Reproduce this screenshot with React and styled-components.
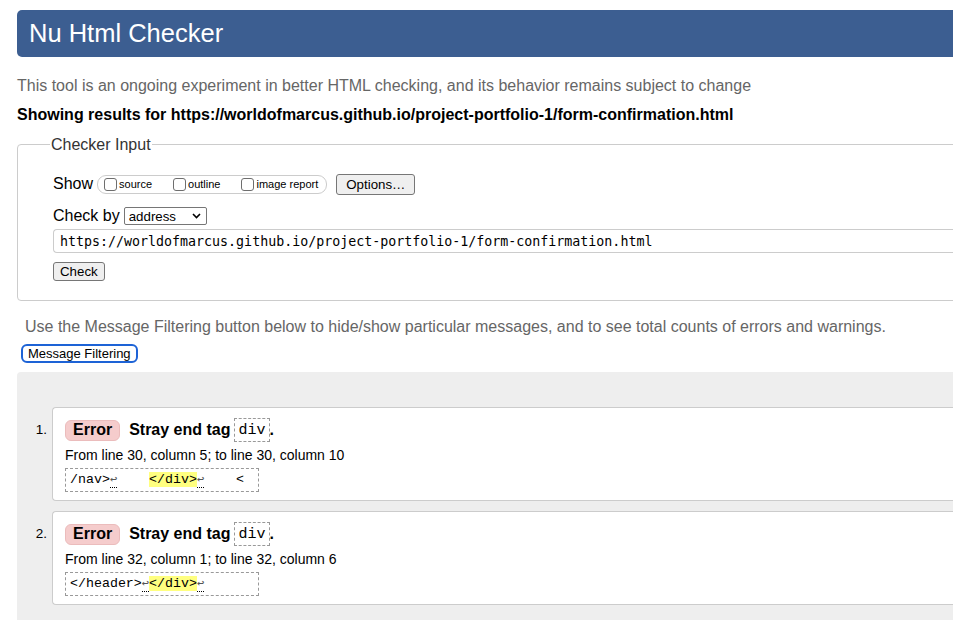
import React from "react";
import styled, { createGlobalStyle } from "styled-components";

const GlobalStyle = createGlobalStyle`
  html, body {
    margin: 0;
    padding: 0;
    background: #fff;
    overflow: hidden;
  }
  body {
    font-family: "Liberation Sans", Arial, Helvetica, sans-serif;
    color: #000;
  }
`;

const Page = styled.div`
  width: 1080px;
  height: 610px;
  padding: 10px 0 0 17px;
  overflow: hidden;
`;

const Header = styled.h1`
  margin: 0;
  height: 47px;
  display: flex;
  align-items: center;
  padding-left: 12px;
  background: #3c5e91;
  color: #fff;
  font-size: 25.5px;
  font-weight: normal;
  border-radius: 5px 0 0 5px;
`;

const Intro = styled.p`
  margin: 19px 0 0;
  font-size: 16px;
  line-height: 19px;
  color: #666;
`;

const ResultsFor = styled.p`
  margin: 10px 0 0;
  font-size: 16px;
  line-height: 19px;
  font-weight: bold;
`;

const Fieldset = styled.fieldset`
  margin: 11px 0 0;
  padding: 0 0 19px;
  border: 1px solid #ccc;
  border-radius: 4px 0 0 4px;
`;

const Legend = styled.legend`
  margin-left: 32px;
  padding: 0 1px;
  font-size: 16px;
  line-height: 19px;
  color: #333;
`;

const FormBody = styled.div`
  display: flex;
  flex-direction: column;
  align-items: flex-start;
  padding-left: 35px;
  font-size: 16px;
  color: #000;
`;

const Row = styled.div`
  display: flex;
  align-items: center;
  gap: ${(p) => p.$gap || 4}px;
  height: ${(p) => p.$h}px;
  margin-top: ${(p) => p.$top}px;
`;

const CheckGroup = styled.span`
  display: inline-flex;
  align-items: center;
  gap: 21px;
  height: 17px;
  padding: 0 8px 0 6px;
  border: 1px solid #ccc;
  border-radius: 9px;
`;

const CheckLabel = styled.label`
  display: inline-flex;
  align-items: center;
  gap: 2px;
  font-size: 11px;
  color: #000;
`;

const CheckBox = styled.input`
  appearance: none;
  margin: 0;
  width: 13px;
  height: 13px;
  border: 1px solid #6e6e6e;
  border-radius: 3px;
  background: #fff;
`;

const Button = styled.button`
  margin-left: ${(p) => p.$left || 0}px;
  height: ${(p) => p.$h || 19}px;
  padding: 0 ${(p) => p.$pad || 6}px;
  font-family: "Liberation Sans", Arial, sans-serif;
  font-size: 13.3px;
  color: #000;
  background: #efefef;
  border: 1px solid #767676;
  border-radius: 3px;
`;

const SelectBox = styled.span`
  display: inline-flex;
  align-items: center;
  justify-content: space-between;
  box-sizing: border-box;
  width: 83px;
  height: 18px;
  padding: 0 5px 0 4px;
  border: 1px solid #767676;
  border-radius: 2px;
  background: #fff;
  font-size: 13.3px;
`;

const UrlInput = styled.div`
  box-sizing: border-box;
  width: 960px;
  height: 24px;
  margin-top: 2px;
  display: flex;
  align-items: center;
  padding-left: 6px;
  border: 1px solid #ccc;
  border-right: none;
  border-radius: 4px 0 0 4px;
  font-family: "DejaVu Sans Mono", Menlo, monospace;
  font-size: 13.3px;
  color: #000;
`;

const Hint = styled.p`
  margin: 16px 0 0 8px;
  font-size: 16px;
  line-height: 19px;
  color: #666;
`;

const FilterButton = styled.button`
  margin: 8px 0 0 4px;
  height: 19px;
  padding: 0 5px;
  font-family: "Liberation Sans", Arial, sans-serif;
  font-size: 13px;
  color: #000;
  background: #fff;
  border: 2px solid #1d63d6;
  border-radius: 6px;
`;

const Results = styled.div`
  margin-top: 9px;
  height: 300px;
  padding-top: 35px;
  background: #eee;
  border-radius: 4px 0 0 0;
  display: flex;
  flex-direction: column;
  gap: 10px;
`;

const Item = styled.div`
  display: grid;
  grid-template-columns: 35px 1fr;
`;

const Number = styled.span`
  font-size: 13.5px;
  line-height: 16px;
  padding: 15px 5px 0 0;
  text-align: right;
`;

const Card = styled.div`
  background: #fff;
  border: 1px solid #ccc;
  border-right: none;
  border-radius: 4px 0 0 4px;
  padding: 10px 0 8px 12px;
`;

const Title = styled.div`
  display: flex;
  align-items: center;
  font-size: 16px;
  font-weight: bold;
  height: 24px;
`;

const Badge = styled.span`
  display: inline-flex;
  align-items: center;
  height: 21px;
  padding: 0 7px 0 7px;
  margin-right: 9px;
  background: #f5cccc;
  border: 1px solid #ebbcbc;
  border-radius: 6px;
  box-sizing: border-box;
`;

const Code = styled.code`
  display: inline-flex;
  align-items: center;
  height: 24px;
  box-sizing: border-box;
  margin-left: 4px;
  padding: 0 3px;
  border: 1px dashed #999;
  font-family: "Liberation Mono", "Courier New", monospace;
  font-weight: normal;
  font-size: 15px;
`;

const Location = styled.p`
  margin: 5px 0 0;
  font-size: 14px;
  line-height: 17px;
`;

const Extract = styled.pre`
  display: inline-block;
  box-sizing: border-box;
  min-width: 194px;
  height: 24px;
  margin: 4px 0 0;
  padding: 0 4px;
  border: 1px dashed #999;
  font-family: "Liberation Mono", "Courier New", monospace;
  font-size: 13.3px;
  line-height: 22px;
`;

const Mark = styled.mark`
  background: #ffff80;
  color: #000;
`;

const LineEnd = styled.b`
  font-weight: normal;
  font-size: 12px;
  color: #555;
  border-bottom: 1px dotted #000;
`;

const Chevron = () => (
  <svg width="9" height="6" viewBox="0 0 9 6" fill="none">
    <path d="M1 1l3.5 3.5L8 1" stroke="#000" strokeWidth="1.6" />
  </svg>
);

const messages = [
  {
    from: "From line 30, column 5; to line 30, column 10",
    extract: ["/nav>", true, "    ", "</div>", true, "    <"],
  },
  {
    from: "From line 32, column 1; to line 32, column 6",
    extract: ["</header>", true, "", "</div>", true, ""],
  },
];

function Message({ n, msg }) {
  const [pre, br1, mid, hit, br2, post] = msg.extract;
  return (
    <Item>
      <Number>{n}.</Number>
      <Card>
        <Title>
          <Badge>Error</Badge>
          Stray end tag <Code>div</Code>.
        </Title>
        <Location>{msg.from}</Location>
        <Extract>
          {pre}
          {br1 && <LineEnd>↩</LineEnd>}
          {mid}
          <Mark>{hit}</Mark>
          {br2 && <LineEnd>↩</LineEnd>}
          {post}
        </Extract>
      </Card>
    </Item>
  );
}

export default function App() {
  return (
    <>
      <GlobalStyle />
      <Page>
        <Header>Nu Html Checker</Header>
        <Intro>
          This tool is an ongoing experiment in better HTML checking, and its
          behavior remains subject to change
        </Intro>
        <ResultsFor>
          Showing results for
          https://worldofmarcus.github.io/project-portfolio-1/form-confirmation.html
        </ResultsFor>
        <Fieldset>
          <Legend>Checker Input</Legend>
          <FormBody>
            <Row $h={24} $top={18}>
              Show
              <CheckGroup>
                <CheckLabel>
                  <CheckBox type="checkbox" />
                  source
                </CheckLabel>
                <CheckLabel>
                  <CheckBox type="checkbox" />
                  outline
                </CheckLabel>
                <CheckLabel>
                  <CheckBox type="checkbox" />
                  image report
                </CheckLabel>
              </CheckGroup>
              <Button $left={5} $h={21} $pad={9}>
                Options…
              </Button>
            </Row>
            <Row $h={22} $top={9}>
              Check by
              <SelectBox>
                address
                <Chevron />
              </SelectBox>
            </Row>
            <UrlInput>
              https://worldofmarcus.github.io/project-portfolio-1/form-confirmation.html
            </UrlInput>
            <Row $h={19} $top={9}>
              <Button>Check</Button>
            </Row>
          </FormBody>
        </Fieldset>
        <Hint>
          Use the Message Filtering button below to hide/show particular
          messages, and to see total counts of errors and warnings.
        </Hint>
        <FilterButton>Message Filtering</FilterButton>
        <Results>
          {messages.map((m, i) => (
            <Message key={i} n={i + 1} msg={m} />
          ))}
        </Results>
      </Page>
    </>
  );
}
